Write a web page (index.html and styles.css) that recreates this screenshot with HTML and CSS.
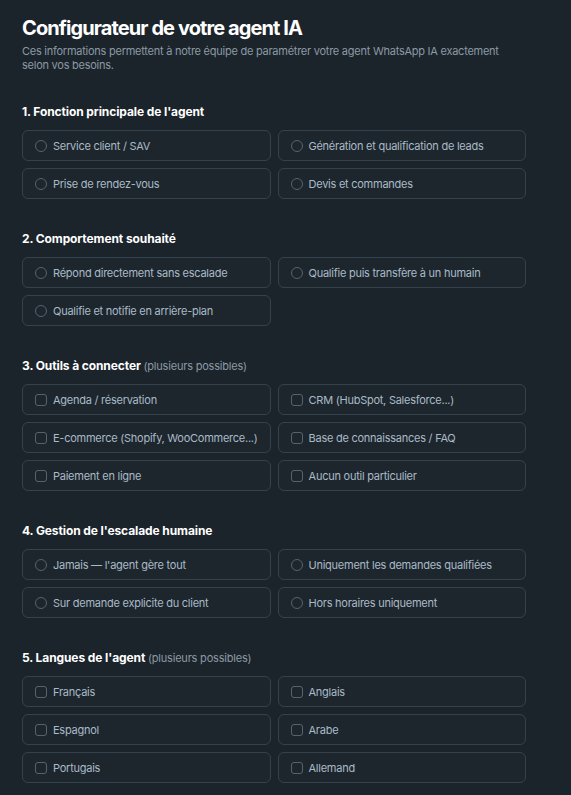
FILE: index.html
```html
<!DOCTYPE html>
<html lang="fr">
<head>
    <meta charset="UTF-8">
    <meta name="viewport" content="width=device-width, initial-scale=1.0">
    <title>Configurateur de votre agent IA</title>
    <link rel="stylesheet" href="styles.css">
</head>
<body>

    <div class="page">
        <h1>Configurateur de votre agent IA</h1>
        <p class="intro">Ces informations permettent à notre équipe de paramétrer votre agent WhatsApp IA exactement selon vos besoins.</p>

        <!-- 1 -->
        <div class="section">
            <h2>1. Fonction principale de l'agent</h2>
            <div class="options">
                <label class="option"><span class="radio"></span>Service client / SAV</label>
                <label class="option"><span class="radio"></span>Génération et qualification de leads</label>
                <label class="option"><span class="radio"></span>Prise de rendez-vous</label>
                <label class="option"><span class="radio"></span>Devis et commandes</label>
            </div>
        </div>

        <!-- 2 -->
        <div class="section">
            <h2>2. Comportement souhaité</h2>
            <div class="options">
                <label class="option"><span class="radio"></span>Répond directement sans escalade</label>
                <label class="option"><span class="radio"></span>Qualifie puis transfère à un humain</label>
                <label class="option"><span class="radio"></span>Qualifie et notifie en arrière-plan</label>
            </div>
        </div>

        <!-- 3 -->
        <div class="section">
            <h2>3. Outils à connecter <span class="hint">(plusieurs possibles)</span></h2>
            <div class="options">
                <label class="option"><span class="check"></span>Agenda / réservation</label>
                <label class="option"><span class="check"></span>CRM (HubSpot, Salesforce...)</label>
                <label class="option"><span class="check"></span>E-commerce (Shopify, WooCommerce...)</label>
                <label class="option"><span class="check"></span>Base de connaissances / FAQ</label>
                <label class="option"><span class="check"></span>Paiement en ligne</label>
                <label class="option"><span class="check"></span>Aucun outil particulier</label>
            </div>
        </div>

        <!-- 4 -->
        <div class="section">
            <h2>4. Gestion de l'escalade humaine</h2>
            <div class="options">
                <label class="option"><span class="radio"></span>Jamais — l'agent gère tout</label>
                <label class="option"><span class="radio"></span>Uniquement les demandes qualifiées</label>
                <label class="option"><span class="radio"></span>Sur demande explicite du client</label>
                <label class="option"><span class="radio"></span>Hors horaires uniquement</label>
            </div>
        </div>

        <!-- 5 -->
        <div class="section">
            <h2>5. Langues de l'agent <span class="hint">(plusieurs possibles)</span></h2>
            <div class="options">
                <label class="option"><span class="check"></span>Français</label>
                <label class="option"><span class="check"></span>Anglais</label>
                <label class="option"><span class="check"></span>Espagnol</label>
                <label class="option"><span class="check"></span>Arabe</label>
                <label class="option"><span class="check"></span>Portugais</label>
                <label class="option"><span class="check"></span>Allemand</label>
            </div>
        </div>
    </div>

</body>
</html>
```

FILE: styles.css
```css
body {
    margin: 0;
    padding: 0;
    background: #1c242b;
    font-family: Inter, "Noto Sans", sans-serif;
    color: #ffffff;
}

.page {
    width: 504px;
    padding: 16px 22px 20px;
}

h1 {
    margin: 0;
    font-size: 20px;
    line-height: 24px;
    font-weight: 700;
    letter-spacing: -0.9px;
    color: #ffffff;
}

.intro {
    margin: 4px 0 0;
    font-size: 11px;
    line-height: 14px;
    letter-spacing: -0.25px;
    color: #8b99a4;
}

.section {
    margin-top: 32px;
}

.section h2 {
    margin: 0 0 10px;
    font-size: 12px;
    line-height: 16px;
    font-weight: 700;
    letter-spacing: -0.1px;
    color: #ffffff;
}

.hint {
    font-size: 11px;
    font-weight: 400;
    letter-spacing: -0.2px;
    color: #8b99a4;
}

.options {
    display: grid;
    grid-template-columns: 1fr 1fr;
    gap: 7px;
}

.option {
    display: flex;
    align-items: center;
    gap: 6px;
    height: 31px;
    box-sizing: border-box;
    padding: 0 12px;
    border: 1px solid #36424b;
    border-radius: 6px;
    background: #1e262d;
    font-size: 11px;
    letter-spacing: -0.25px;
    white-space: nowrap;
    color: #a9bac7;
    cursor: pointer;
}

.radio {
    width: 12px;
    height: 12px;
    box-sizing: border-box;
    border: 1px solid #56636d;
    border-radius: 50%;
    flex-shrink: 0;
}

.check {
    width: 12px;
    height: 12px;
    box-sizing: border-box;
    border: 1px solid #56636d;
    border-radius: 3px;
    flex-shrink: 0;
}
```
